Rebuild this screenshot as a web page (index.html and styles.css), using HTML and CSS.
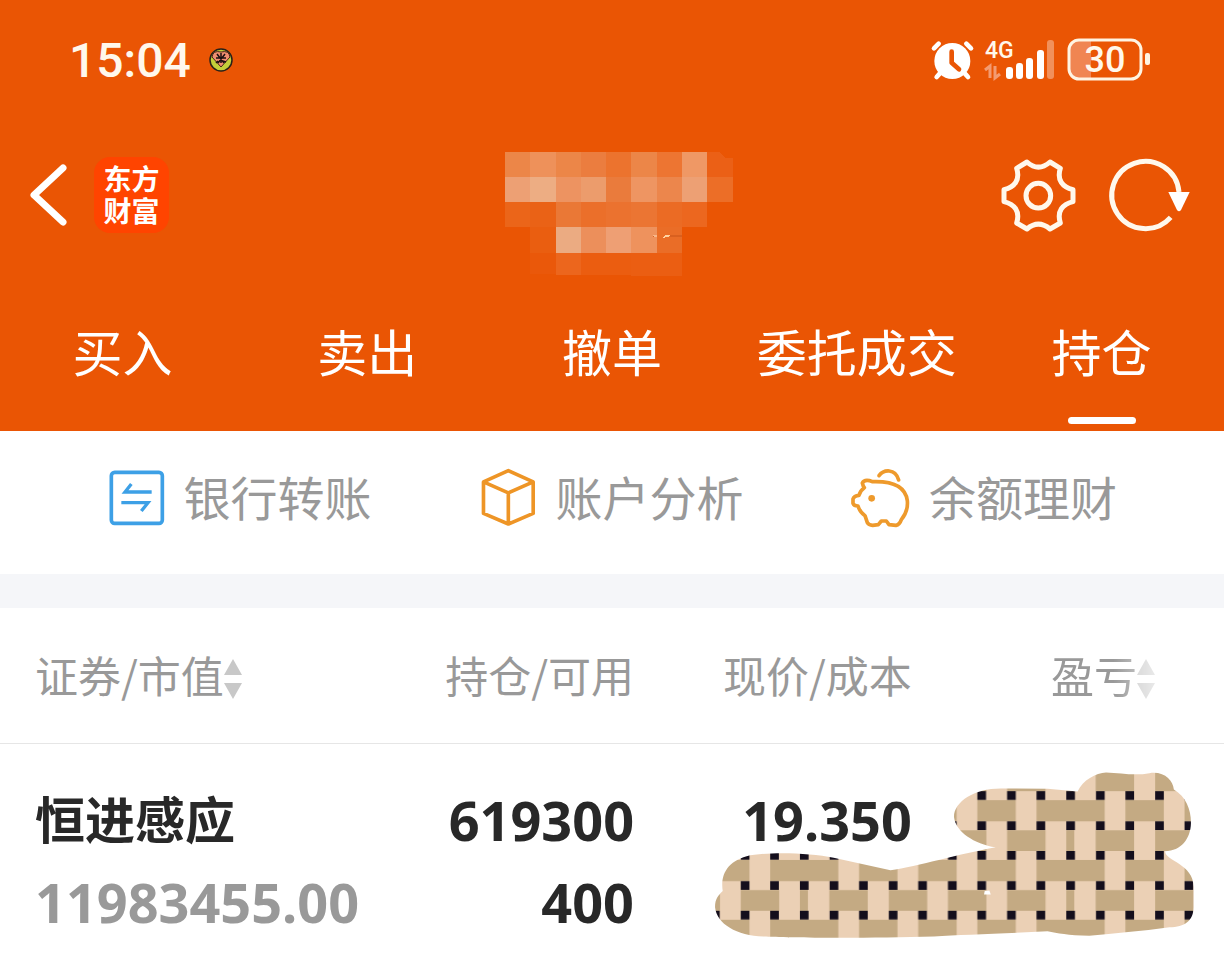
FILE: index.html
```
<!DOCTYPE html>
<html lang="zh-CN">
<head>
  <meta charset="UTF-8" />
  <meta name="viewport" content="width=device-width, initial-scale=1" />
  <title>持仓</title>
  <link rel="stylesheet" href="styles.css">
</head>
<body>

<header class="top">
  <div class="status">
    <span class="clock">15:04</span>
    <svg class="app-dot" viewBox="0 0 24 24" width="24" height="24">
      <circle cx="12" cy="12" r="11" fill="#c3cf3a" stroke="#2a2018" stroke-width="1.5"/>
      <path d="M12 19 L3 9 Q4 2 12 4 Q20 2 21 9Z" fill="#ef8d70" stroke="#4a2418"/>
      <path d="M8 6l7 9M16 6l-7 9M12 5v10M7 10h10M9 13l-2 2M14 13l3 1" stroke="#1c1010" stroke-width="1.5" fill="none"/>
    </svg>

    <svg class="alarm" viewBox="0 0 126 126" width="42" height="42">
      <circle cx="64" cy="66" r="54" fill="#fff"/>
      <path d="M9 28L23 14M106 14L120 28M26 104L17 114M102 104L111 114" stroke="#fff" stroke-width="14" stroke-linecap="round"/>
      <path d="M62 38V71L84 91" fill="none" stroke="#ea5504" stroke-width="14" stroke-linecap="round" stroke-linejoin="round"/>
    </svg>
    <svg class="signal" viewBox="0 0 70 42" width="70" height="42">
      <text x="0" y="19" font-size="23">4G</text>
      <path d="M0 31L5 27V39M10 27V39L15 35" fill="none" stroke="#f39b72" stroke-width="3"/>
      <g fill="#fff">
        <rect x="21" y="28" width="7" height="12" rx="3"/>
        <rect x="31" y="24" width="7" height="16" rx="3"/>
        <rect x="41" y="19" width="7" height="21" rx="3"/>
        <rect x="52" y="11" width="7" height="29" rx="3"/>
        <rect x="62" y="1" width="7" height="39" rx="3" opacity=".35"/>
      </g>
    </svg>
    <svg class="battery" viewBox="0 0 84 42" width="84" height="42">
      <path d="M24 1H12A10 10 0 0 0 2 11V30A10 10 0 0 0 12 40H24Z" fill="#f08552"/>
      <rect x="2" y="1" width="72" height="39" rx="10" fill="none" stroke="#fff4e2" stroke-width="3"/>
      <rect x="78" y="14" width="5" height="12" rx="2" fill="#fff4e2"/>
      <text x="38" y="33" font-size="36" text-anchor="middle">30</text>
    </svg>
  </div>

  <div class="navbar">
    <div class="nav-left">
      <button class="icon-btn" aria-label="返回">
        <svg viewBox="0 0 36 62" width="36" height="62">
          <path d="M33 4L4 31L33 58" fill="none" stroke="#fff" stroke-width="7" stroke-linecap="round" stroke-linejoin="round"/>
        </svg>
      </button>
      <a class="brand" href="#">东方<br>财富</a>
    </div>

    <svg class="account" viewBox="428 130 364 160" width="364" height="160" shape-rendering="crispEdges">
      <g fill="#ec8648">
        <rect x="505" y="152" width="26" height="25"/>
        <rect x="530" y="152" width="26" height="25" fill="#ee915a"/>
        <rect x="556" y="152" width="25" height="25"/>
        <rect x="581" y="152" width="25" height="25" fill="#eb7d3f"/>
        <rect x="606" y="152" width="26" height="25" fill="#ec732e"/>
        <rect x="631" y="152" width="26" height="25"/>
        <rect x="657" y="152" width="25" height="25" fill="#ed7532"/>
        <rect x="682" y="152" width="25" height="25" fill="#ef9865"/>
        <path d="M707 152H720L725 158H733V177H707Z" fill="#eb6016"/>
      </g>
      <g fill="#eda074">
        <rect x="505" y="177" width="26" height="25"/>
        <rect x="530" y="177" width="26" height="25" fill="#edad83"/>
        <rect x="556" y="177" width="25" height="25" fill="#ed9361"/>
        <rect x="581" y="177" width="25" height="25" fill="#ec9c6c"/>
        <rect x="606" y="177" width="26" height="25" fill="#ea7b3c"/>
        <rect x="631" y="177" width="26" height="25" fill="#ee9562"/>
        <rect x="657" y="177" width="25" height="25" fill="#ec864c"/>
        <rect x="682" y="177" width="25" height="25"/>
        <rect x="707" y="177" width="26" height="25" fill="#ec6e27"/>
      </g>
      <g fill="#eb722f">
        <rect x="505" y="202" width="26" height="25" fill="#eb6519"/>
        <rect x="530" y="202" width="26" height="25" fill="#ea6216"/>
        <rect x="556" y="202" width="25" height="25" fill="#ea7836"/>
        <rect x="581" y="202" width="25" height="25" fill="#eb6f2a"/>
        <rect x="606" y="202" width="26" height="25"/>
        <rect x="631" y="202" width="26" height="25" fill="#eb7533"/>
        <rect x="657" y="202" width="25" height="25" fill="#eb6b24"/>
        <rect x="682" y="202" width="25" height="25" fill="#ec671f"/>
      </g>
      <rect x="530" y="227" width="26" height="26" fill="#ea5e10"/>
      <rect x="556" y="227" width="25" height="26" fill="#ebab82"/>
      <rect x="581" y="227" width="25" height="26" fill="#ec8f5b"/>
      <rect x="606" y="227" width="26" height="26" fill="#ee9f74"/>
      <rect x="631" y="227" width="26" height="26" fill="#ee925d"/>
      <rect x="657" y="227" width="25" height="26" fill="#ea6d27"/>
      <rect x="530" y="253" width="26" height="21" fill="#ea580a"/>
      <rect x="556" y="253" width="25" height="22" fill="#ec661d"/>
      <rect x="581" y="253" width="51" height="22" fill="#eb5d10"/>
      <rect x="631" y="253" width="51" height="23" fill="#eb5e12"/>
      <path d="M648 236L657 235V237ZM657 236L682 235V237Z" fill="#d9601f"/>
      <path d="M662 238L666 235H670L668 237Z" fill="#ffd2a0"/>
      <path d="M653 235H657V237H654Z" fill="#f8b78a"/>
    </svg>

    <div class="nav-right">
      <button class="icon-btn" aria-label="设置">
        <svg viewBox="62 56 225 225" width="75" height="75">
          <g fill="none" stroke="#fff8ec" stroke-width="15" stroke-linejoin="round">
            <path d="M140 68Q174 99 209 68L240 87C229 122 246 143 278 151V187C246 195 229 216 240 251L209 269Q174 240 140 269L109 251C120 216 103 195 71 187V151C103 143 120 122 109 87Z"/>
            <circle cx="174" cy="169" r="37"/>
          </g>
        </svg>
      </button>
      <button class="icon-btn" aria-label="刷新">
        <svg viewBox="390 54 240 225" width="80" height="75">
          <path d="M572 232A101 101 0 1 1 597 156" fill="none" stroke="#fff8ec" stroke-width="15"/>
          <path d="M565 156H629L603 210Q597 218 591 210Z" fill="#fff"/>
        </svg>
      </button>
    </div>
  </div>

  <nav class="tabs">
    <a href="#">买入</a>
    <a href="#">卖出</a>
    <a href="#">撤单</a>
    <a href="#">委托成交</a>
    <a href="#" class="active">持仓</a>
  </nav>
</header>

<section class="shortcuts">
  <a href="#">
    <svg viewBox="60 60 165 165" width="55" height="55">
      <rect x="67" y="67" width="153" height="153" rx="10" fill="none" stroke="#3da0e6" stroke-width="11"/>
      <path d="M188 126H108L127 102M97 158H177L157 183" fill="none" stroke="#3da0e6" stroke-width="10"/>
    </svg>
    <span>银行转账</span>
  </a>
  <a href="#">
    <svg viewBox="67 57 165 172" width="55" height="57">
      <path d="M149 62L224 96V191L149 223L74 191V96ZM74 96L149 129L224 96M149 129V223" fill="none" stroke="#ee9526" stroke-width="11" stroke-linejoin="round"/>
    </svg>
    <span>账户分析</span>
  </a>
  <a href="#">
    <svg viewBox="67 55 174 174" width="58" height="58">
      <g fill="none" stroke="#ee9a2c" stroke-width="11" stroke-linecap="round" stroke-linejoin="round">
        <path d="M132 93C116 87 105 89 101 97Q103 106 107 111Q95 119 91 134Q76 135 73 145V158Q76 166 88 166Q94 185 109 195L116 216Q120 223 132 224L149 222L158 211H173L181 222L202 224Q213 222 218 207C232 190 238 171 236 150C231 111 195 91 132 93Z"/>
        <path d="M151 75C164 57 200 51 210 88"/>
      </g>
      <circle cx="129" cy="143" r="10" fill="#ee9a2c"/>
    </svg>
    <span>余额理财</span>
  </a>
</section>

<main>
  <table class="holdings">
    <colgroup>
      <col class="c-name"><col class="c-qty"><col class="c-price"><col class="c-profit">
    </colgroup>
    <thead>
      <tr>
        <th><button class="sort">证券/市值<svg viewBox="0 0 18 40" width="18" height="40"><path d="M9 0L18 16H0ZM0 24H18L9 40Z" fill="#c8c8c8"/></svg></button></th>
        <th>持仓/可用</th>
        <th>现价/成本</th>
        <th><button class="sort faded">盈亏<svg viewBox="0 0 18 40" width="18" height="40"><path d="M9 0L18 16H0ZM0 24H18L9 40Z" fill="#c8c8c8"/></svg></button></th>
      </tr>
    </thead>
    <tbody>
      <tr>
        <td><div class="name">恒进感应</div><div class="sub">11983455.00</div></td>
        <td><div>619300</div><div>400</div></td>
        <td><div>19.350</div></td>
        <td class="hidden-value">
          <svg viewBox="0 0 1568 568" width="524" height="190">
            <defs>
              <pattern id="weave" x="299" y="93" width="797" height="179" patternUnits="userSpaceOnUse">
                <rect width="797" height="179" fill="#ebd0b5"/>
                <path d="M0 27H115V90H0ZM177 27H292V90H177ZM354 27H469V90H354ZM531 27H646V90H531ZM708 27H797V90H708Z" fill="#c4aa83"/>
                <path d="M0 117H24V179H0ZM88 117H203V179H88ZM266 117H381V179H266ZM443 117H558V179H443ZM620 117H735V179H620Z" fill="#c4aa83"/>
                <path d="M0 13H26M89 13H115M177 13H203M266 13H292M354 13H380M443 13H469M531 13H557M620 13H646M708 13H734M0 103H26M89 103H115M177 103H203M266 103H292M354 103H380M443 103H469M531 103H557M620 103H646M708 103H734" stroke="#140e1c" stroke-width="26"/>
              </pattern>
            </defs>
            <path d="M45 440C45 415 55 405 68 392C60 340 85 300 150 285C220 274 330 278 400 292L570 330C650 318 780 280 885 261C820 250 765 215 760 170C760 125 820 85 900 85L1040 86L1130 94C1145 60 1185 38 1215 37C1260 38 1300 48 1345 39C1390 33 1415 60 1418 88C1455 110 1470 150 1469 190C1468 235 1440 272 1392 273C1390 300 1478 310 1477 380V440C1477 480 1450 500 1405 500C1320 512 1240 518 1165 526C1100 524 1070 518 1040 512C900 520 780 522 700 528C500 534 250 532 190 528C110 525 50 490 45 440Z" fill="url(#weave)"/>
            <path d="M852 392L866 390L870 402H850Z" fill="#fff"/>
          </svg>
        </td>
      </tr>
    </tbody>
  </table>
</main>

</body>
</html>
```
FILE: styles.css
```
* { box-sizing: border-box; }
body { margin: 0; background: #fff; font-family: "Noto Sans CJK SC", sans-serif; color: #282828; }
a { color: inherit; text-decoration: none; }
button { font: inherit; color: inherit; background: none; border: 0; padding: 0; cursor: pointer; }
svg { display: block; flex-shrink: 0; overflow: visible; }

.top { background: #ea5504; color: #fff; }

.status { display: flex; align-items: center; height: 120px; padding: 0 73px 0 69px; font-family: Roboto, sans-serif; font-weight: 500; }
.status text { fill: #fff8ec; }
.clock { font-size: 48px; color: #fff8ec; }
.app-dot { margin-left: 18px; }
.alarm { margin-left: auto; }
.signal { margin-left: 12px; }
.battery { margin-left: 12px; }

.navbar { display: grid; grid-template-columns: 1fr 364px 1fr; height: 170px; padding: 10px 34px 0 30px; }
.nav-left, .nav-right { display: flex; align-items: center; height: 130px; }
.nav-left { gap: 28px; }
.nav-right { justify-content: flex-end; gap: 34px; }
.brand {
  width: 75px;
  height: 76px;
  padding-top: 5px;
  border-radius: 16px;
  background: #ff4400;
  font-size: 28px;
  font-weight: 700;
  line-height: 32px;
  text-align: center;
}

.tabs { display: grid; grid-template-columns: repeat(5, 1fr); }
.tabs a { position: relative; height: 141px; font-size: 50px; line-height: 120px; text-align: center; white-space: nowrap; }
.tabs .active::after {
  content: "";
  position: absolute;
  left: 50%;
  bottom: 7px;
  width: 68px;
  height: 7px;
  margin-left: -34px;
  border-radius: 4px;
  background: #fff;
}

.shortcuts { display: grid; grid-template-columns: repeat(3, 1fr); padding: 0 54px; border-bottom: 34px solid #f5f6f9; }
.shortcuts a { display: flex; align-items: center; justify-content: center; gap: 20px; height: 143px; padding-bottom: 10px; font-size: 47px; color: #999; white-space: nowrap; }
.shortcuts span { padding-bottom: 5px; }

.holdings { width: 100%; border-collapse: collapse; table-layout: fixed; }
.c-name { width: 30%; }
.c-qty { width: 21.8%; }
.c-price { width: 22.7%; }
.c-profit { width: 25.5%; }

th, td { padding: 0; text-align: right; white-space: nowrap; }
th:first-child, td:first-child { padding-left: 35px; text-align: left; }
th:last-child { padding-right: 69px; }
th { height: 135px; padding-bottom: 3px; border-bottom: 1px solid #e6e6e6; font-size: 43px; font-weight: 400; color: #999; }
.sort { display: flex; align-items: center; }
.sort svg { margin-top: 10px; }
.faded { margin-left: auto; -webkit-mask-image: linear-gradient(90deg, #000 60%, rgba(0, 0, 0, .4)); mask-image: linear-gradient(90deg, #000 60%, rgba(0, 0, 0, .4)); }

td { padding: 35px 0 28px; font-family: "Noto Sans", "Noto Sans CJK SC", sans-serif; font-size: 54px; font-weight: 700; line-height: 82px; vertical-align: top; }
.name { font-size: 50px; }
.sub { color: #999; }

.hidden-value { position: relative; }
.hidden-value svg { position: absolute; top: 16px; right: 0; }
```
